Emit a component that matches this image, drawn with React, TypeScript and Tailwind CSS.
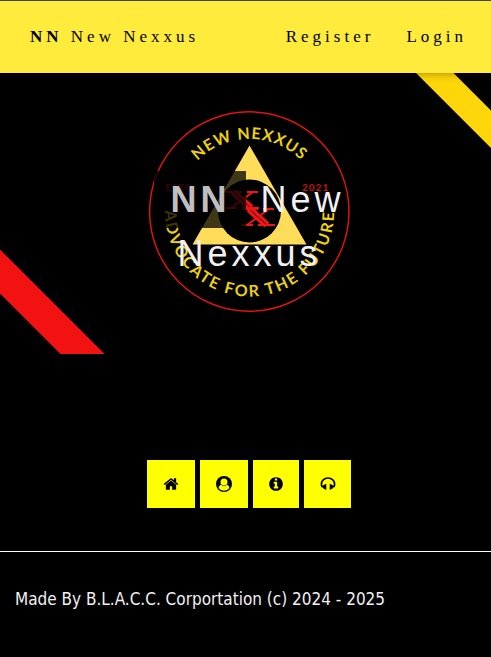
import type { ReactNode } from "react";

const serif = "font-['Liberation_Serif',serif]";

function CrossMark({ x, y }: { x: number; y: number }) {
  return (
    <g transform={`translate(${x} ${y})`} stroke="#f01616" fill="none">
      <path d="M8 1L26 17" strokeWidth="7" />
      <path d="M28 1L6 17" strokeWidth="2" />
      <path d="M1 1H17M22 1H33M1 17H12M17 17H34" strokeWidth="2" />
      <path d="M9 2L25 16" stroke="#400" strokeWidth="1" />
    </g>
  );
}

function Emblem() {
  return (
    <svg viewBox="0 73 491 281" className="block w-full" role="img" aria-label="New Nexxus emblem">
      <defs>
        <path id="arc-top" d="M176.500 212a73 73 0 0 1 146 0" />
        <path id="arc-bottom" d="M170.100 183.100A84.500 84.500 0 1 0 328.900 183.100" />
      </defs>
      <rect x="0" y="73" width="491" height="281" fill="#000" />
      <path d="M416 73H453.500L491 110.500V148Z" fill="#ffd60a" />
      <path d="M0 249.500L104.500 354H60.500L0 293.500Z" fill="#f21212" />
      <circle cx="249.300" cy="211.500" r="99.700" fill="none" stroke="#dc1414" strokeWidth="1.500" />
      <path d="M249.500 145.500L306.500 244.500H192.500Z" fill="#ffdc5a" />
      <circle cx="249.500" cy="211" r="31.500" fill="#000" />
      <g fontFamily="Lato, sans-serif" fontWeight="700" fill="#ecd011" textAnchor="middle" fontSize="16">
        <text letterSpacing="1">
          <textPath href="#arc-top" startOffset="50%">NEW NEXXUS</textPath>
        </text>
        <text letterSpacing="2">
          <textPath href="#arc-bottom" startOffset="50%">ADVOCATE FOR THE FUTURE</textPath>
        </text>
      </g>
      <g fontFamily="Lato, sans-serif" fontWeight="900" fontSize="10" fill="#b91212" letterSpacing="1">
        <text x="165" y="191">ESTD</text>
        <text x="302" y="191">2021</text>
      </g>
      <CrossMark x={225} y={191} />
      <CrossMark x={241} y={208} />
    </svg>
  );
}

function Tile({ label, width, children }: { label: string; width: string; children: ReactNode }) {
  return (
    <a href="#" aria-label={label} className={`flex h-12 items-center justify-center bg-[#ffff00] text-black ${width}`}>
      {children}
    </a>
  );
}

export default function App() {
  return (
    <div className="min-h-screen bg-black">
      <header className={`relative z-10 flex h-[73px] items-center justify-between border-t border-[#444] bg-[#ffeb3b] pr-6 pl-[30px] text-[17px] tracking-[4px] text-black shadow-[0_2px_5px_rgba(0,0,0,0.16),0_2px_10px_rgba(0,0,0,0.12)] ${serif}`}>
        <a href="#"><b>NN</b> New Nexxus</a>
        <nav className="flex gap-8">
          <a href="#">Register</a>
          <a href="#">Login</a>
        </nav>
      </header>
      <main>
        <section className="relative">
          <Emblem />
          <h1 className="absolute inset-x-0 top-[100px] mx-auto w-[200px] translate-x-1 text-center font-['Liberation_Sans',sans-serif] text-[36px] leading-[54px] tracking-[4px] text-[#f1f1f1]">
            <span className="bg-black/75 px-4 py-2 text-[#bfbfbf]"><b>NN</b></span> <span>New Nexxus</span>
          </h1>
        </section>
        <nav className="mt-[106px] flex justify-center gap-[5px] pl-[7px]">
          <Tile label="Home" width="w-12">
            <svg className="size-4" viewBox="0 0 1792 1792" fill="currentColor">
              <path d="M1472 992v480q0 26-19 45t-45 19h-384v-384h-256v384h-384q-26 0-45-19t-19-45v-480q0-1 .5-3t.5-3l575-474 575 474q1 2 1 6zm223-69l-62 74q-8 9-21 11h-3q-13 0-21-7l-692-577-692 577q-12 8-24 7-13-2-21-11l-62-74q-8-10-7-23.500t11-21.500l719-599q32-26 76-26t76 26l244 204v-195q0-14 9-23t23-9h192q14 0 23 9t9 23v408l219 182q10 8 11 21.500t-7 23.500z" />
            </svg>
          </Tile>
          <Tile label="Account" width="w-12">
            <svg className="size-4" viewBox="0 0 16 16">
              <circle cx="8" cy="8" r="8" fill="currentColor" />
              <path d="M2.500 12Q3 9 5 8.800Q8 11.400 11 8.800Q13 9 13.500 12A6.900 6.900 0 0 1 2.500 12Z" fill="#ffff00" />
              <circle cx="8" cy="6" r="3.500" fill="#ffff00" />
            </svg>
          </Tile>
          <Tile label="About" width="w-[46px]">
            <svg className="size-4" viewBox="0 0 1792 1792" fill="currentColor">
              <path d="M1152 1376v-160q0-14-9-23t-23-9h-96v-512q0-14-9-23t-23-9h-320q-14 0-23 9t-9 23v160q0 14 9 23t23 9h96v320h-96q-14 0-23 9t-9 23v160q0 14 9 23t23 9h448q14 0 23-9t9-23zm-128-896v-160q0-14-9-23t-23-9h-192q-14 0-23 9t-9 23v160q0 14 9 23t23 9h192q14 0 23-9t9-23zm640 416q0 209-103 385.500t-279.500 279.500-385.500 103-385.500-103-279.500-279.500-103-385.500 103-385.500 279.500-279.500 385.500-103 385.500 103 279.500 279.500 103 385.500z" />
            </svg>
          </Tile>
          <Tile label="Music" width="w-[47px]">
            <svg className="size-4" viewBox="0 0 1792 1792" fill="currentColor">
              <path d="M1728 886q0 166-60 314l-20 49-185 33q-22 83-90.500 135.500t-156.500 52.500v32q0 14-9 23t-23 9h-64q-14 0-23-9t-9-23v-576q0-14 9-23t23-9h64q14 0 23 9t9 23v32q71 0 130 35.500t93 95.500l68-12q29-95 29-193 0-148-88-279t-236.500-209-315.500-78-315.500 78-236.500 209-88 279q0 98 29 193l68 12q34-60 93-95.500t130-35.500v-32q0-14 9-23t23-9h64q14 0 23 9t9 23v576q0 14-9 23t-23 9h-64q-14 0-23-9t-9-23v-32q-88 0-156.500-52.500t-90.500-135.500l-185-33-20-49q-60-148-60-314 0-151 67-291t179-242.500 266-163.500 320-61 320 61 266 163.500 179 242.500 67 291z" />
            </svg>
          </Tile>
        </nav>
      </main>
      <footer className="mt-[43px] border-t border-white px-[15px] pt-9 pb-12 font-['DejaVu_Sans_Condensed','DejaVu_Sans',sans-serif] text-[17px] leading-[22px] text-[#f1f1f1]">
        <p>Made By B.L.A.C.C. Corportation (c) 2024 - 2025</p>
      </footer>
    </div>
  );
}
